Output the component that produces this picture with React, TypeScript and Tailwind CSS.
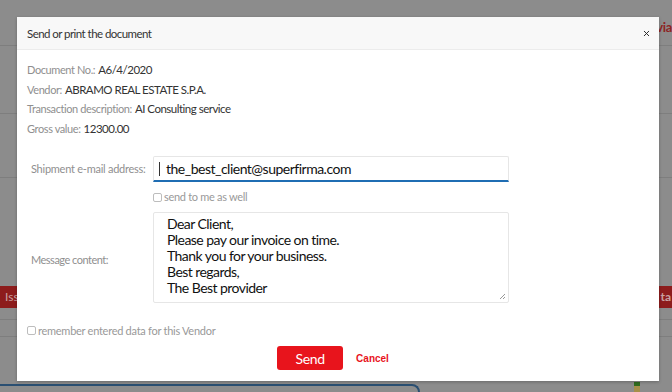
import { X } from "lucide-react"

// Background page rows (dimmed by the overlay), modal sits over them
function BackgroundPage() {
  return (
    <div className="flex h-[392px] w-[672px] flex-col bg-[#8c8c8c] font-['Lato',sans-serif]">
      <div className="flex h-[46px] shrink-0 items-start justify-end border-b border-[#7e7e7e] pt-[18px]">
        <span className="text-[13px] font-bold tracking-[-0.3px] text-[#8e2424]">via</span>
      </div>
      <div className="h-[68px] shrink-0 border-b border-[#7e7e7e]" />
      <div className="h-[64px] shrink-0 border-b border-[#7e7e7e]" />
      <div className="h-[108px] shrink-0" />
      <div className="flex h-[22px] shrink-0 items-center justify-between">
        <div className="flex h-full w-[40px] items-center bg-[#8d1c1c] pl-[5px] text-[12px] text-[#c9a0a0]">Iss</div>
        <div className="flex h-full w-[40px] items-center justify-end bg-[#8d1c1c] pr-[1px] text-[12px] font-bold text-[#c9a0a0]">r ta</div>
      </div>
      <div className="h-[12px] shrink-0 border-b border-[#7e7e7e]" />
      <div className="h-[17px] shrink-0 border-b border-[#7e7e7e]" />
      <div className="flex flex-1 items-end">
        <div className="h-[8px] w-[420px] rounded-tr-[30px] border-t-2 border-r-2 border-[#2a4f72]" />
        <div className="ml-auto mr-[32px] flex h-[10px] w-[6px] flex-col">
          <div className="h-[4px] bg-[#2f6b1f]" />
          <div className="flex-1 bg-[#a58f4a]" />
        </div>
      </div>
    </div>
  )
}

function Checkbox() {
  return <span className="inline-block h-[9px] w-[9px] rounded-[2px] border border-[#bdbdbd] bg-white" />
}

const info = [
  ["Document No.:", "A6/4/2020"],
  ["Vendor:", "ABRAMO REAL ESTATE S.P.A."],
  ["Transaction description:", "AI Consulting service"],
  ["Gross value:", "12300.00"],
]

export default function App() {
  return (
    <div className="relative h-[392px] w-[672px] overflow-hidden font-['Lato',sans-serif]">
      <BackgroundPage />

      <div className="absolute left-[17px] top-[17px] flex h-[364px] w-[642px] flex-col bg-white shadow-[0_1px_3px_rgba(0,0,0,0.25)]">
        {/* Header */}
        <div className="flex h-[33px] shrink-0 items-center justify-between border-b border-[#ececec] bg-[#f8f8f8] pl-[10px] pr-[8px] pt-[1px]">
          <span className="text-[11.5px] tracking-[-0.55px] text-[#333]">Send or print the document</span>
          <X className="h-[9px] w-[9px] text-[#222]" strokeWidth={2.5} />
        </div>

        {/* Document info */}
        <div className="flex flex-col pl-[10px] pt-[10px] leading-[19.5px]">
          {info.map(([label, value]) => (
            <div key={label} className="flex items-baseline gap-[3px]">
              <span className="text-[11px] tracking-[-0.4px] text-[#8f8f8f]">{label}</span>
              <span className="text-[11.5px] tracking-[-0.5px] text-[#333]">{value}</span>
            </div>
          ))}
        </div>

        {/* Form */}
        <div className="mt-[18px] flex flex-col pl-[14px]">
          <div className="flex items-center">
            <label className="w-[122px] text-[11px] tracking-[-0.25px] text-[#8f8f8f]">Shipment e-mail address:</label>
            <div className="flex h-[26px] w-[356px] items-center rounded-t-[2px] border border-b-2 border-[#e6e6e6] border-b-[#1f6db3] pl-[5px] text-[14px] tracking-[-0.5px] text-[#111]">
              <span className="mr-[6px] h-[14px] w-px bg-[#333]" />
              the_best_client@superfirma.com
            </div>
          </div>
          <div className="ml-[122px] mt-[7px] flex items-center gap-[2px] text-[11px] tracking-[-0.3px] text-[#999]">
            <Checkbox />
            <span>send to me as well</span>
          </div>
          <div className="mt-[6px] flex items-center">
            <label className="w-[122px] pt-[6px] text-[11px] tracking-[-0.5px] text-[#8f8f8f]">Message content:</label>
            <div className="relative h-[91px] w-[356px] rounded-[2px] border border-[#e6e6e6] pl-[13px] pt-[3px] text-[14px] leading-[16.2px] tracking-[-0.55px] text-[#111]">
              <div>Dear Client,</div>
              <div>Please pay our invoice on time.</div>
              <div>Thank you for your business.</div>
              <div>Best regards,</div>
              <div>The Best provider</div>
              <svg className="absolute bottom-[2px] right-[2px]" width="7" height="7" viewBox="0 0 7 7">
                <path d="M6 1L1 6M6 4L4 6" stroke="#999" strokeWidth="1" />
              </svg>
            </div>
          </div>
        </div>

        <div className="mt-[20px] flex items-center gap-[2px] pl-[10px] text-[11px] tracking-[-0.27px] text-[#999]">
          <Checkbox />
          <span>remember entered data for this Vendor</span>
        </div>

        <div className="mt-[7px] flex items-center justify-center gap-[13px] pr-[10px]">
          <button className="h-[24px] w-[66px] rounded-[3px] bg-[#e8141c] text-[14px] tracking-[-0.3px] text-white">Send</button>
          <button className="font-['Liberation_Sans',sans-serif] text-[10px] font-bold text-[#e8141c]">Cancel</button>
        </div>
      </div>
    </div>
  )
}
